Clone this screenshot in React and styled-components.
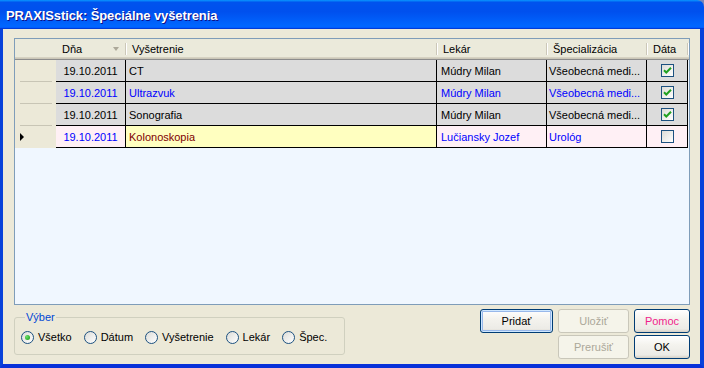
import React from "react";
import styled, { createGlobalStyle } from "styled-components";

const GlobalStyle = createGlobalStyle`
  html, body {
    margin: 0;
    padding: 0;
    background: #7a86b8;
  }
  body {
    font-family: "Liberation Sans", Arial, sans-serif;
    font-size: 11px;
  }
`;

const Window = styled.div`
  width: 704px;
  height: 368px;
  display: flex;
  flex-direction: column;
  border-radius: 0 7px 0 0;
  overflow: hidden;
`;

const TitleBar = styled.div`
  height: 29px;
  flex: none;
  box-sizing: border-box;
  padding: 2px 0 0 6px;
  display: flex;
  align-items: center;
  background: linear-gradient(
    180deg,
    #0997ff,
    #0053ee 8%,
    #0050ee 40%,
    #0066ff 88%,
    #0066ff 93%,
    #005bff 95%,
    #003dd7 96%,
    #003dd7
  );
  color: #fff;
  font-family: "Liberation Sans", Arial, sans-serif;
  font-weight: bold;
  font-size: 13px;
  letter-spacing: -0.1px;
  text-shadow: 1px 1px #0f1089;
`;

const Frame = styled.div`
  flex: 1;
  display: flex;
  flex-direction: column;
  background: #ece9d8;
  border-left: 3px solid #0842da;
  border-right: 4px solid #0842da;
  border-bottom: 4px solid #0831d9;
  padding: 9px 10px 0 11px;
`;

const GridFrame = styled.div`
  height: 267px;
  box-sizing: border-box;
  border: 1px solid #7f9db9;
  background: #f0f7ff;
`;

const cols = "41px 70px 311px 110px 100px 41px";

const HeaderRow = styled.div`
  display: grid;
  grid-template-columns: ${cols};
  height: 21px;
  background: #ebeadb;
  box-shadow: inset 0 -1px #8c8c8c, inset 0 -2px #cbc7b8, inset 0 -3px #d6d2c2;
`;

const HeaderCell = styled.div`
  position: relative;
  display: flex;
  align-items: center;
  justify-content: space-between;
  padding: 0 7px 2px 6px;
  color: #000;
  white-space: nowrap;

  &::after {
    content: "";
    position: absolute;
    right: 0;
    top: 4px;
    height: 12px;
    width: 1px;
    background: #cbc7b8;
    box-shadow: 1px 0 #fff;
    display: ${(p) => (p.$sep ? "block" : "none")};
  }
`;

const SortArrow = styled.span`
  width: 0;
  height: 0;
  border-left: 3.5px solid transparent;
  border-right: 3.5px solid transparent;
  border-top: 4px solid #aca899;
`;

const DataRow = styled.div`
  display: grid;
  grid-template-columns: ${cols};
  height: 22px;
`;

const Indicator = styled.div`
  position: relative;
  display: flex;
  align-items: center;
  padding-left: 5px;
  background: #ece9d8;

  &::after {
    content: "";
    position: absolute;
    left: 5px;
    bottom: 0;
    width: 32px;
    height: 1px;
    background: #c8c5b5;
    box-shadow: 0 1px #fff;
    display: ${(p) => (p.$last ? "none" : "block")};
  }
`;

const Pointer = styled.span`
  width: 0;
  height: 0;
  border-top: 4.5px solid transparent;
  border-bottom: 4.5px solid transparent;
  border-left: 4px solid #000;
`;

const Cell = styled.div`
  box-sizing: border-box;
  display: flex;
  align-items: center;
  justify-content: ${(p) => p.$justify || "flex-start"};
  padding: 0 3px 0 ${(p) => p.$pad ?? 3}px;
  background: ${(p) => p.$bg};
  color: ${(p) => p.$color};
  border-right: 1px solid #000;
  border-bottom: 1px solid #000;
  white-space: nowrap;
  overflow: hidden;
`;

const Check = styled.span`
  width: 13px;
  height: 13px;
  box-sizing: border-box;
  border: 1px solid #1c5180;
  background: linear-gradient(135deg, #dcdcd7, #fff);
  display: flex;
  align-items: center;
  justify-content: center;
`;

const Footer = styled.div`
  display: flex;
  justify-content: space-between;
  align-items: flex-start;
`;

const GroupBox = styled.fieldset`
  margin: 6px 0 0 0;
  width: 331px;
  height: 44px;
  box-sizing: border-box;
  padding: 7px 0 0 6px;
  border: 1px solid #d0d0bf;
  border-radius: 3px;
  display: flex;
  align-items: flex-start;
  gap: 12px;
`;

const Legend = styled.legend`
  color: #0046d5;
  padding: 0 1px;
  margin-left: 4px;
  line-height: 13px;
`;

const RadioItem = styled.label`
  display: flex;
  align-items: center;
  gap: 4px;
  color: #000;
  line-height: 13px;
`;

const RadioCircle = styled.span`
  width: 13px;
  height: 13px;
  box-sizing: border-box;
  border-radius: 50%;
  border: 1px solid #1c5180;
  background: linear-gradient(135deg, #dcdcd7, #fff);
  display: flex;
  align-items: center;
  justify-content: center;

  &::after {
    content: "";
    width: 5px;
    height: 5px;
    border-radius: 50%;
    background: radial-gradient(circle at 35% 35%, #6be06a, #12950f);
    display: ${(p) => (p.$on ? "block" : "none")};
  }
`;

const ButtonGrid = styled.div`
  margin-top: 4px;
  display: grid;
  grid-template-columns: 73px 71px 56px;
  grid-template-rows: 24px 24px;
  column-gap: 5px;
  row-gap: 2px;
`;

const Button = styled.button`
  grid-column: ${(p) => p.$col};
  grid-row: ${(p) => p.$row};
  font-family: "Liberation Sans", Arial, sans-serif;
  font-size: 11px;
  color: ${(p) => p.$color || "#000"};
  border: 1px solid #003c74;
  border-radius: 3px;
  padding: 0;
  background: linear-gradient(180deg, #fff, #f4f3ee 40%, #ecebe6 86%, #d6d0c5);
  box-shadow: ${(p) =>
    p.$default ? "inset 0 0 0 1px #cee7ff, inset 0 0 0 2px #98b8ea" : "none"};

  &:disabled {
    color: #aca899;
    border-color: #c9c7ba;
    background: #f5f4ea;
  }
`;

const rows = [
  { date: "19.10.2011", exam: "CT", doctor: "Múdry Milan", spec: "Všeobecná medi...", checked: true, bg: "#dcdcdc", color: "#000" },
  { date: "19.10.2011", exam: "Ultrazvuk", doctor: "Múdry Milan", spec: "Všeobecná medi...", checked: true, bg: "#dcdcdc", color: "#0000ff" },
  { date: "19.10.2011", exam: "Sonografia", doctor: "Múdry Milan", spec: "Všeobecná medi...", checked: true, bg: "#dcdcdc", color: "#000" },
  { date: "19.10.2011", exam: "Kolonoskopia", doctor: "Lučiansky Jozef", spec: "Urológ", checked: false, bg: "#fff0f5", color: "#0000ff", examBg: "#ffffc0", examColor: "#800000", current: true },
];

const filters = ["Všetko", "Dátum", "Vyšetrenie", "Lekár", "Špec."];

const CheckMark = () => (
  <svg width="9" height="9" viewBox="0 0 9 9">
    <polyline points="1,4.2 3.3,6.5 8,1.8" fill="none" stroke="#21a121" strokeWidth="2" />
  </svg>
);

export default function App() {
  return (
    <>
      <GlobalStyle />
      <Window>
        <TitleBar>PRAXISstick: Špeciálne vyšetrenia</TitleBar>
        <Frame>
          <GridFrame>
            <HeaderRow>
              <HeaderCell />
              <HeaderCell $sep>
                Dňa
                <SortArrow />
              </HeaderCell>
              <HeaderCell $sep>Vyšetrenie</HeaderCell>
              <HeaderCell $sep>Lekár</HeaderCell>
              <HeaderCell $sep>Špecializácia</HeaderCell>
              <HeaderCell $sep>Dáta</HeaderCell>
            </HeaderRow>
            {rows.map((r, i) => (
              <DataRow key={i}>
                <Indicator $last={i === rows.length - 1}>
                  {r.current && <Pointer />}
                </Indicator>
                <Cell $bg={r.bg} $color={r.color} $justify="center">
                  {r.date}
                </Cell>
                <Cell $bg={r.examBg || r.bg} $color={r.examColor || r.color}>
                  {r.exam}
                </Cell>
                <Cell $bg={r.bg} $color={r.color} $pad={4}>
                  {r.doctor}
                </Cell>
                <Cell $bg={r.bg} $color={r.color} $pad={2}>
                  {r.spec}
                </Cell>
                <Cell $bg={r.bg} $color={r.color} $justify="center" $pad={3}>
                  <Check>{r.checked && <CheckMark />}</Check>
                </Cell>
              </DataRow>
            ))}
          </GridFrame>
          <Footer>
            <GroupBox>
              <Legend>Výber</Legend>
              {filters.map((f, i) => (
                <RadioItem key={f}>
                  <RadioCircle $on={i === 0} />
                  {f}
                </RadioItem>
              ))}
            </GroupBox>
            <ButtonGrid>
              <Button $col={1} $row={1} $default>Pridať</Button>
              <Button $col={2} $row={1} disabled>Uložiť</Button>
              <Button $col={3} $row={1} $color="#f01e8c">Pomoc</Button>
              <Button $col={2} $row={2} disabled>Prerušiť</Button>
              <Button $col={3} $row={2}>OK</Button>
            </ButtonGrid>
          </Footer>
        </Frame>
      </Window>
    </>
  );
}
